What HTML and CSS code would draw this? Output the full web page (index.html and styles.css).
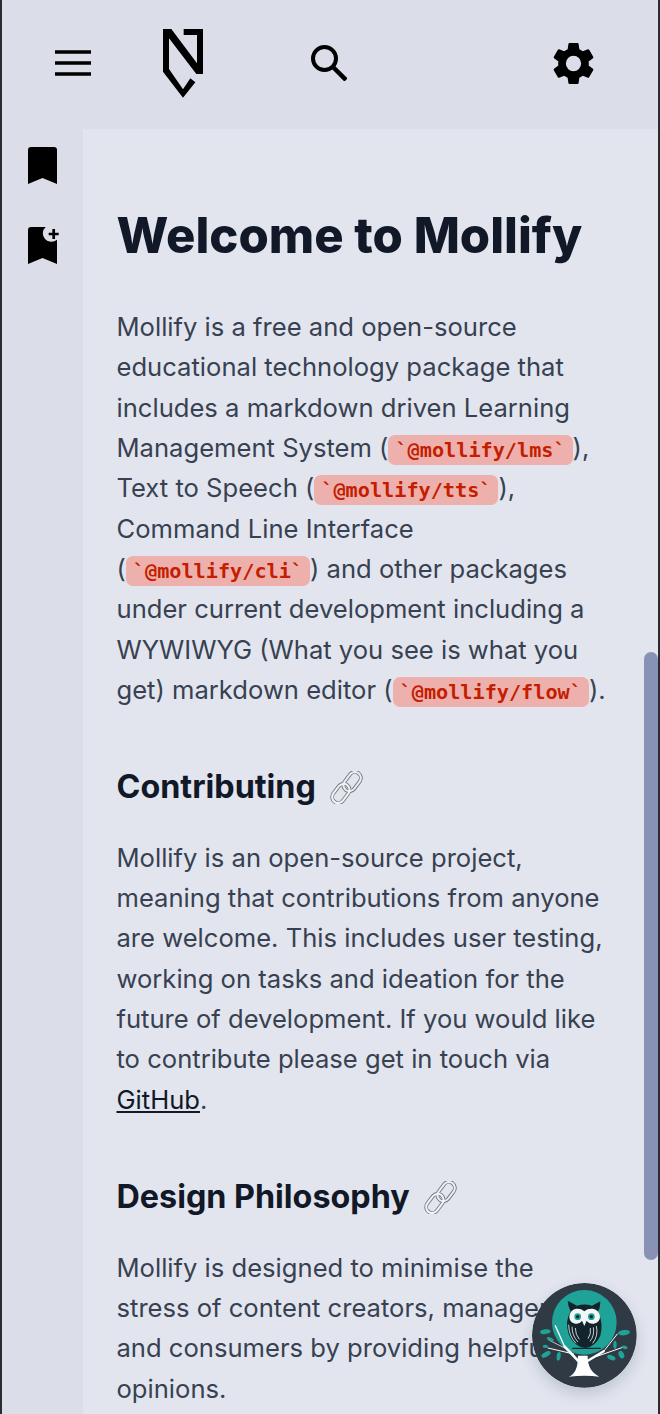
FILE: index.html
```html
<!DOCTYPE html>
<html lang="en">
<head>
<meta charset="utf-8">
<title>Welcome to Mollify</title>
<link rel="stylesheet" href="styles.css">
</head>
<body>
<div class="app">
  <header class="topbar">
    <svg class="icon icon-menu" viewBox="0 0 36 26"><path d="M0 2h36M0 13h36M0 24h36" fill="none" stroke="#000" stroke-width="3.500"/></svg>
    <svg class="icon icon-logo" viewBox="490 87 120 207"><path d="M490 87H515L592 190V105H552V87H610V222H590L508 115V207L550 268L572 235L587 247L550 293L490 215Z"/></svg>
    <svg class="icon icon-search" viewBox="0 0 36 36"><circle cx="13.500" cy="13.500" r="11.500" fill="none" stroke="#000" stroke-width="4"/><path d="M22 22l13 13" stroke="#000" stroke-width="4.500" fill="none"/></svg>
    <svg class="icon icon-gear" viewBox="0 0 24 24"><path d="M19.140 12.940c.04-.3.060-.61.060-.94 0-.32-.02-.64-.07-.94l2.030-1.580a.49.49 0 0 0 .12-.61l-1.920-3.320a.488.488 0 0 0-.59-.22l-2.390.96c-.5-.38-1.030-.7-1.620-.94l-.36-2.540a.484.484 0 0 0-.48-.41h-3.840c-.24 0-.43.170-.47.410l-.36 2.540c-.59.240-1.130.570-1.620.940l-2.390-.96c-.22-.08-.47 0-.59.220L2.740 8.870c-.12.210-.08.470.12.610l2.030 1.580c-.05.300-.09.630-.09.940s.02.640.07.940l-2.030 1.580a.49.49 0 0 0-.12.610l1.920 3.320c.12.220.37.290.59.220l2.390-.96c.5.380 1.030.7 1.620.940l.36 2.540c.05.240.24.410.48.410h3.840c.24 0 .44-.17.470-.41l.36-2.540c.59-.24 1.130-.56 1.620-.94l2.390.96c.22.080.47 0 .59-.22l1.920-3.320c.12-.22.070-.47-.12-.61l-2.010-1.580zM12 15.600A3.600 3.600 0 1 1 12 8.400a3.600 3.600 0 0 1 0 7.200z"/></svg>
  </header>
  <div class="body">
    <aside class="rail">
      <svg class="icon icon-mark" viewBox="0 0 29 37"><path d="M3 0h23a3 3 0 0 1 3 3v34l-14.500-6L0 37V3a3 3 0 0 1 3-3z"/></svg>
      <svg class="icon icon-mark-add" viewBox="0 0 33 37"><path d="M3 0h14.700a8 8 0 0 0 11.300 12.700V37l-14.500-6L0 37V3a3 3 0 0 1 3-3z"/><path d="M25.700 2v10M20.700 7h10" stroke="#000" stroke-width="2.700" fill="none"/></svg>
    </aside>
    <main class="content">
      <h1>Welcome to Mollify</h1>
      <p>Mollify is a free and open-source educational technology package that includes a markdown driven Learning Management System (<code>`@mollify/lms`</code>), Text to Speech (<code>`@mollify/tts`</code>), Command Line Interface (<code>`@mollify/cli`</code>) and other packages under current development including a WYWIWYG (What you see is what you get) markdown editor (<code>`@mollify/flow`</code>).</p>
      <h2>Contributing <svg class="chain" viewBox="0 0 33 33"><g fill="none"><rect x="16" y="0" width="12" height="21" rx="6" transform="rotate(37 22 10.700)" stroke="#74777f" stroke-width="3.800"/><rect x="5" y="12" width="12" height="21" rx="6" transform="rotate(37 11 22.300)" stroke="#7a7d85" stroke-width="3.800"/><rect x="16" y="0" width="12" height="21" rx="6" transform="rotate(37 22 10.700)" stroke="#eceef1" stroke-width="2"/><rect x="5" y="12" width="12" height="21" rx="6" transform="rotate(37 11 22.300)" stroke="#f3f4f6" stroke-width="2"/></g></svg></h2>
      <p>Mollify is an open-source project, meaning that contributions from anyone are welcome. This includes user testing, working on tasks and ideation for the future of development. If you would like to contribute please get in touch via <a href="#">GitHub</a>.</p>
      <h2>Design Philosophy <svg class="chain" viewBox="0 0 33 33"><g fill="none"><rect x="16" y="0" width="12" height="21" rx="6" transform="rotate(37 22 10.700)" stroke="#74777f" stroke-width="3.800"/><rect x="5" y="12" width="12" height="21" rx="6" transform="rotate(37 11 22.300)" stroke="#7a7d85" stroke-width="3.800"/><rect x="16" y="0" width="12" height="21" rx="6" transform="rotate(37 22 10.700)" stroke="#eceef1" stroke-width="2"/><rect x="5" y="12" width="12" height="21" rx="6" transform="rotate(37 11 22.300)" stroke="#f3f4f6" stroke-width="2"/></g></svg></h2>
      <p>Mollify is designed to minimise the stress of content creators, managers and consumers by providing helpful opinions.</p>
    </main>
  </div>
  <div class="scrollthumb"></div>
  <svg class="owl" viewBox="-10 -13 315 315">
    <circle cx="147" cy="144" r="157" fill="#2f3a44"/>
    <circle cx="147" cy="105" r="97" fill="#1fa398"/>
    <g fill="none" stroke="#fff" stroke-linecap="round">
      <path d="M130 222L88 178" stroke-width="8"/>
      <path d="M88 178L60 115" stroke-width="4"/>
      <path d="M115 200L38 182" stroke-width="3"/>
      <path d="M100 188L40 158" stroke-width="2"/>
      <path d="M155 222L205 192" stroke-width="7"/>
      <path d="M205 192L246 140" stroke-width="3"/>
      <path d="M182 208L268 178" stroke-width="3"/>
    </g>
    <path d="M100 268Q128 258 128 205L157 205Q156 250 192 268Q150 262 100 268Z" fill="#fff"/>
    <path d="M97 40L125 55Q147 48 170 55L195 42Q195 62 188 72Q205 110 195 145Q180 178 150 182Q115 178 100 140Q88 100 106 72Q98 58 97 40Z" fill="#13242c"/>
    <path d="M147 72C130 58 104 64 102 88C102 110 130 116 140 100L147 116L154 100C164 116 194 110 194 88C192 64 164 58 147 72Z" fill="#f2f6f5"/>
    <circle cx="127" cy="88" r="10" fill="#1fa398"/><circle cx="168" cy="88" r="10" fill="#1fa398"/>
    <circle cx="127" cy="88" r="5" fill="#13242c"/><circle cx="168" cy="88" r="5" fill="#13242c"/>
    <path d="M100 112Q100 145 122 168M110 118Q110 145 128 164M120 122Q120 142 132 156M183 116Q190 145 172 168M174 120Q178 145 164 162M165 122Q168 140 158 154" fill="none" stroke="#eaf0ef" stroke-width="2.500"/>
    <path d="M112 183H195" stroke="#13242c" stroke-width="4" stroke-linecap="round"/>
    <g fill="#1fa398">
      <ellipse cx="30" cy="133" rx="16" ry="7" transform="rotate(-8 30 133)"/>
      <ellipse cx="45" cy="156" rx="11" ry="5" transform="rotate(25 45 156)"/>
      <ellipse cx="30" cy="177" rx="8" ry="5"/>
      <ellipse cx="32" cy="201" rx="15" ry="7" transform="rotate(-28 32 201)"/>
      <ellipse cx="70" cy="207" rx="6" ry="13" transform="rotate(8 70 207)"/>
      <ellipse cx="266" cy="136" rx="18" ry="8" transform="rotate(-6 266 136)"/>
      <ellipse cx="239" cy="172" rx="5" ry="12"/>
      <ellipse cx="268" cy="180" rx="9" ry="5" transform="rotate(15 268 180)"/>
      <ellipse cx="258" cy="202" rx="8" ry="12" transform="rotate(-25 258 202)"/>
      <ellipse cx="228" cy="211" rx="13" ry="7" transform="rotate(22 228 211)"/>
    </g>
  </svg>
</div>
</body>
</html>
```
FILE: styles.css
```css
* { box-sizing: border-box; }
html, body { margin: 0; height: 100%; overflow: hidden; }
body { font-family: Inter, "Liberation Sans", sans-serif; background: #e2e5ee; }
.app { position: relative; height: 1414px; display: flex; flex-direction: column; border-left: 2px solid #2b2b30; border-right: 2px solid #2b2b30; background: #dbdde8; overflow: hidden; }
.icon { display: block; flex: none; }
.topbar { height: 129px; flex: none; display: flex; align-items: center; padding-left: 52.500px; padding-bottom: 3px; }
.icon-menu { width: 36px; height: 26px; }
.icon-logo { width: 40px; height: 69px; margin-left: 72.800px; }
.icon-search { width: 36px; height: 36px; margin-left: 108px; }
.icon-gear { width: 51px; height: 51px; margin-left: 200.500px; }
.body { display: flex; flex: 1; min-height: 0; }
.rail { width: 81px; flex: none; display: flex; flex-direction: column; gap: 43px; padding: 18px 0 0 26px; }
.icon-mark { width: 29px; height: 37px; }
.icon-mark-add { width: 33px; height: 37px; }
.content { flex: 1; background: #e2e5ee; padding: 78px 48px 0 33.500px; color: #374151; font-size: 25.600px; line-height: 40.330px; }
h1 { margin: 0 0 42px; font-size: 49px; line-height: 58px; font-weight: 800; color: #111827; }
h2 { margin: 53px 0 26.500px; font-size: 32.300px; line-height: 48px; font-weight: 700; color: #111827; display: flex; align-items: center; gap: 14px; }
p { margin: 0; }
code { font-family: "DejaVu Sans Mono", monospace; font-size: 20.200px; line-height: 1; font-weight: 700; color: #c41d00; background: #eeb0ac; border-radius: 7px; padding: 3px 7px; }
a { color: #111827; }
.chain { width: 33px; height: 33px; flex: none; }
.scrollthumb { position: absolute; right: 0; top: 652px; width: 14px; height: 608px; border-radius: 7px; background: #8792b5; }
.owl { position: absolute; left: 530px; top: 1283px; width: 105px; height: 105px; border-radius: 50%; box-shadow: 0 6px 14px rgba(40,50,70,.18); }
```
